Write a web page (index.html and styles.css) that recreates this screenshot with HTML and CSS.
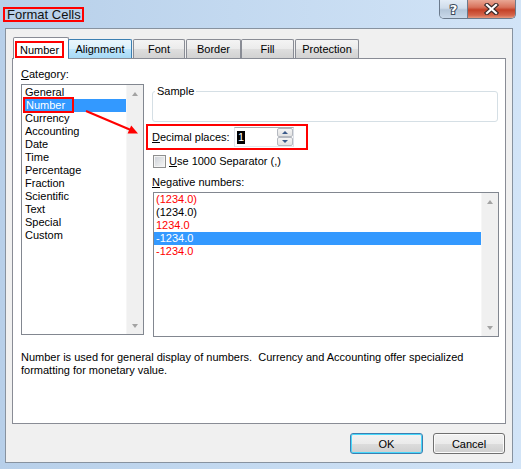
FILE: index.html
```html
<!DOCTYPE html>
<html>
<head>
<meta charset="utf-8">
<link rel="stylesheet" href="styles.css">
</head>
<body>
<div class="window">
  <div class="titlebar">
    <span class="title">Format Cells</span>
    <div class="caption-buttons">
      <div class="cap help"><span class="help-glyph">?</span></div>
      <div class="cap close">
        <svg width="15" height="12" viewBox="0 0 15 12"><path d="M3 2 L12 10 M12 2 L3 10" stroke="#3a2a2a" stroke-width="4.4" stroke-linecap="square" fill="none"/><path d="M3 2 L12 10 M12 2 L3 10" stroke="#ffffff" stroke-width="2.2" stroke-linecap="square" fill="none"/></svg>
      </div>
    </div>
  </div>
  <div class="client">
    <div class="tabs">
      <div class="tab selected"><span class="tab-mark">Number</span></div>
      <div class="tab hover w-align">Alignment</div>
      <div class="tab w-font">Font</div>
      <div class="tab w-border">Border</div>
      <div class="tab w-fill">Fill</div>
      <div class="tab w-prot">Protection</div>
    </div>
    <div class="panel">
      <div class="top">
        <div class="left-col">
          <div class="label cat-label"><u>C</u>ategory:</div>
          <div class="listbox cat">
            <div class="items">
              <div class="item">General</div>
              <div class="item sel"><span class="item-mark">Number</span></div>
              <div class="item">Currency</div>
              <div class="item">Accounting</div>
              <div class="item">Date</div>
              <div class="item">Time</div>
              <div class="item">Percentage</div>
              <div class="item">Fraction</div>
              <div class="item">Scientific</div>
              <div class="item">Text</div>
              <div class="item">Special</div>
              <div class="item">Custom</div>
            </div>
            <div class="vscroll">
              <div class="sbtn"><span class="tri-up"></span></div>
              <div class="strack"></div>
              <div class="sbtn"><span class="tri-down"></span></div>
            </div>
          </div>
        </div>
        <div class="right-col">
          <fieldset class="sample"><legend>Sample</legend></fieldset>
          <div class="decimal-row">
            <span><u>D</u>ecimal places:</span>
            <div class="spinbox">
              <span class="spin-sel">1</span>
              <div class="spin-btns">
                <div class="spin-btn"><span class="stri-up"></span></div>
                <div class="spin-btn"><span class="stri-down"></span></div>
              </div>
            </div>
          </div>
          <div class="check-row">
            <span class="checkbox"></span>
            <span><u>U</u>se 1000 Separator (,)</span>
          </div>
          <div class="label neg-label"><u>N</u>egative numbers:</div>
          <div class="listbox neg">
            <div class="items">
              <div class="item red">(1234.0)</div>
              <div class="item">(1234.0)</div>
              <div class="item red">1234.0</div>
              <div class="item sel">-1234.0</div>
              <div class="item red">-1234.0</div>
            </div>
            <div class="vscroll">
              <div class="sbtn"><span class="tri-up"></span></div>
              <div class="strack"></div>
              <div class="sbtn"><span class="tri-down"></span></div>
            </div>
          </div>
        </div>
      </div>
      <p class="desc">Number is used for general display of numbers.&nbsp; Currency and Accounting offer specialized<br>formatting for monetary value.</p>
      <svg class="annot-arrow" width="140" height="90" viewBox="0 0 140 90">
        <line x1="73" y1="52" x2="119" y2="71.5" stroke="#ff0000" stroke-width="2"/>
        <polygon points="125,74.5 114.6,74.4 118.2,66.4" fill="#ff0000"/>
      </svg>
    </div>
    <div class="buttons">
      <button class="btn default ok">OK</button>
      <button class="btn cancel">Cancel</button>
    </div>
  </div>
</div>
</body>
</html>
```
FILE: styles.css
```css
html, body {
  margin: 0;
  padding: 0;
}
body {
  width: 521px;
  height: 469px;
  overflow: hidden;
  font-family: "Liberation Sans", Arial, sans-serif;
  font-size: 11px;
  line-height: 13px;
  color: #000;
}
.window {
  width: 521px;
  height: 469px;
  box-sizing: border-box;
  display: flex;
  flex-direction: column;
  background: linear-gradient(90deg, #b7cfe9 0%, #c3d9f0 45%, #d2e4f7 100%);
}
.titlebar {
  height: 28px;
  display: flex;
  align-items: flex-start;
  flex: none;
}
.title {
  margin: 7px 0 0 3px;
  height: 15px;
  box-sizing: border-box;
  border: 2px solid #ff0000;
  padding: 0 1px 0 2px;
  font-size: 13px;
  line-height: 11px;
  color: #111;
}
.caption-buttons {
  margin-left: auto;
  margin-right: 5px;
  display: flex;
  height: 19px;
  box-sizing: border-box;
  border: 1px solid #6b7a8c;
  border-top: none;
  border-radius: 0 0 5px 5px;
  overflow: hidden;
}
.cap {
  display: flex;
  align-items: center;
  justify-content: center;
  height: 18px;
}
.help {
  width: 27px;
  border-right: 1px solid #6b7a8c;
  background: linear-gradient(#e3ecf6 0%, #cfdcea 45%, #b4c6d9 55%, #c9d9ea 100%);
}
.help-glyph {
  font-family: "DejaVu Sans", sans-serif;
  font-weight: bold;
  font-size: 13px;
  line-height: 13px;
  color: #fff;
  -webkit-text-stroke: 2px #3c4a5c;
  paint-order: stroke fill;
}
.close {
  width: 47px;
  background: linear-gradient(#e9a794 0%, #d8735c 40%, #c44127 55%, #d5654b 85%, #e59a7f 100%);
}
.client {
  flex: 1;
  margin: 0 8px 6px 5px;
  background: #f0f0f0;
  border: 1px solid #87929f;
  display: flex;
  flex-direction: column;
}
.tabs {
  display: flex;
  align-items: flex-end;
  height: 22px;
  margin: 8px 0 -1px 7px;
  position: relative;
  z-index: 1;
}
.tab {
  box-sizing: border-box;
  height: 19px;
  margin-bottom: 1px;
  border: 1px solid #898c95;
  border-bottom: none;
  border-radius: 2px 2px 0 0;
  background: linear-gradient(#f4f4f4 0%, #ebebeb 50%, #dedede 51%, #d2d2d2 100%);
  display: flex;
  align-items: center;
  justify-content: center;
}
.tab.selected {
  width: 56px;
  height: 22px;
  margin-bottom: 0;
  background: #fff;
  align-items: flex-start;
  justify-content: flex-start;
  padding: 3px 0 0 1px;
}
.tab-mark {
  width: 49px;
  height: 17px;
  box-sizing: border-box;
  border: 2px solid #ff0000;
  display: flex;
  align-items: center;
  justify-content: center;
  line-height: 12px;
}
.tab.hover {
  background: linear-gradient(#eaf6fd 0%, #d9f0fc 50%, #bee6fd 51%, #a7d9f5 100%);
  border-color: #3c7fb1;
}
.w-align { width: 64px; margin-left: -1px; }
.w-font { width: 52px; margin-left: 1px; }
.w-border { width: 55px; margin-left: 1px; }
.w-fill { width: 53px; margin-left: 0; }
.w-prot { width: 64px; margin-left: 1px; }
.panel {
  position: relative;
  margin: 0 6px;
  height: 366px;
  box-sizing: border-box;
  border: 1px solid #898c95;
  background: #fff;
  flex: none;
}
.top {
  display: flex;
  padding-left: 8px;
}
.left-col {
  width: 123px;
  flex: none;
}
.label {
  line-height: 13px;
}
.cat-label {
  margin: 9px 0 3px;
}
.listbox {
  box-sizing: border-box;
  border: 1px solid #828790;
  background: #fff;
  display: flex;
}
.listbox .items {
  flex: 1;
}
.listbox.cat {
  height: 251px;
}
.listbox.cat .items {
  padding: 1px 0 0 1px;
}
.item {
  height: 13px;
  line-height: 13px;
  padding-left: 2px;
  white-space: nowrap;
}
.item.sel {
  background: #3399ff;
  color: #fff;
}
.item.red {
  color: #ff0000;
}
.item-mark {
  outline: 2px solid #ff0000;
  padding: 0 7px 0 1px;
}
.vscroll {
  width: 17px;
  flex: none;
  display: flex;
  flex-direction: column;
  background: #f0f0f0;
  border-left: 1px solid #f6f6f6;
  box-sizing: border-box;
}
.sbtn {
  height: 17px;
  display: flex;
  align-items: center;
  justify-content: center;
}
.strack {
  flex: 1;
}
.tri-up, .tri-down {
  width: 0;
  height: 0;
  border-left: 3.5px solid transparent;
  border-right: 3.5px solid transparent;
}
.tri-up {
  border-bottom: 4px solid #a3a3a3;
}
.tri-down {
  border-top: 4px solid #a3a3a3;
}
.right-col {
  margin-left: 8px;
  width: 347px;
  flex: none;
  display: flex;
  flex-direction: column;
}
.sample {
  margin: 26px 0 0 0;
  padding: 0 0 0 2px;
  width: 346px;
  height: 37px;
  box-sizing: border-box;
  border: 1px solid #d5dfe5;
  border-radius: 3px;
  min-width: 0;
}
.sample legend {
  padding: 0 2px;
  line-height: 13px;
}
.decimal-row {
  margin: 2px 0 0 -6px;
  width: 162px;
  height: 26px;
  box-sizing: border-box;
  border: 2px solid #ff0000;
  display: flex;
  align-items: center;
  padding-left: 4px;
}
.spinbox {
  margin-left: auto;
  margin-right: 12px;
  width: 60px;
  height: 20px;
  box-sizing: border-box;
  border: 1px solid;
  border-color: #abadb3 #dbdfe6 #e3e9ef #e2e3ea;
  background: #fff;
  display: flex;
  align-items: center;
  padding-left: 2px;
}
.spin-sel {
  background: #000;
  color: #fff;
  padding: 0 1px;
  line-height: 13px;
}
.spin-btns {
  margin-left: auto;
  width: 16px;
  height: 18px;
  display: flex;
  flex-direction: column;
}
.spin-btn {
  flex: 1;
  box-sizing: border-box;
  border: 1px solid #b5b9c0;
  border-radius: 2px;
  background: linear-gradient(#f5f5f5, #e2e2e2);
  display: flex;
  align-items: center;
  justify-content: center;
}
.stri-up, .stri-down {
  width: 0;
  height: 0;
  border-left: 3px solid transparent;
  border-right: 3px solid transparent;
}
.stri-up { border-bottom: 3px solid #3b5a8a; }
.stri-down { border-top: 3px solid #3b5a8a; }
.check-row {
  margin-top: 5px;
  height: 13px;
  display: flex;
  align-items: center;
  gap: 3px;
}
.checkbox {
  margin-left: 1px;
  width: 13px;
  height: 13px;
  box-sizing: border-box;
  border: 1px solid #8e8f8f;
  background: linear-gradient(135deg, #cbcfd5 0%, #e6e8ea 60%, #f6f6f6 100%);
  box-shadow: inset 0 0 0 1px #f4f4f4;
}
.neg-label {
  margin-top: 8px;
}
.listbox.neg {
  margin: 3px 0 0 1px;
  width: 346px;
  height: 145px;
}
.desc {
  margin: 14px 0 0 0;
  padding-left: 8px;
  line-height: 13px;
  white-space: nowrap;
}
.annot-arrow {
  position: absolute;
  left: 0;
  top: 0;
  pointer-events: none;
}
.buttons {
  display: flex;
  justify-content: flex-end;
  gap: 10px;
  margin-top: 9px;
  padding-right: 7px;
}
.btn {
  height: 21px;
  box-sizing: border-box;
  border: 1px solid #707070;
  border-radius: 3px;
  background: linear-gradient(#f2f2f2 0%, #ebebeb 50%, #dddddd 51%, #cfcfcf 100%);
  box-shadow: inset 0 0 0 1px #fbfbfb;
  font-family: "Liberation Sans", Arial, sans-serif;
  font-size: 11px;
  color: #000;
  padding: 0;
}
.btn.ok { width: 73px; }
.btn.cancel { width: 72px; }
.btn.default {
  border-color: #3c7fb1;
  box-shadow: inset 0 0 0 1px #48d8fb;
}
```
